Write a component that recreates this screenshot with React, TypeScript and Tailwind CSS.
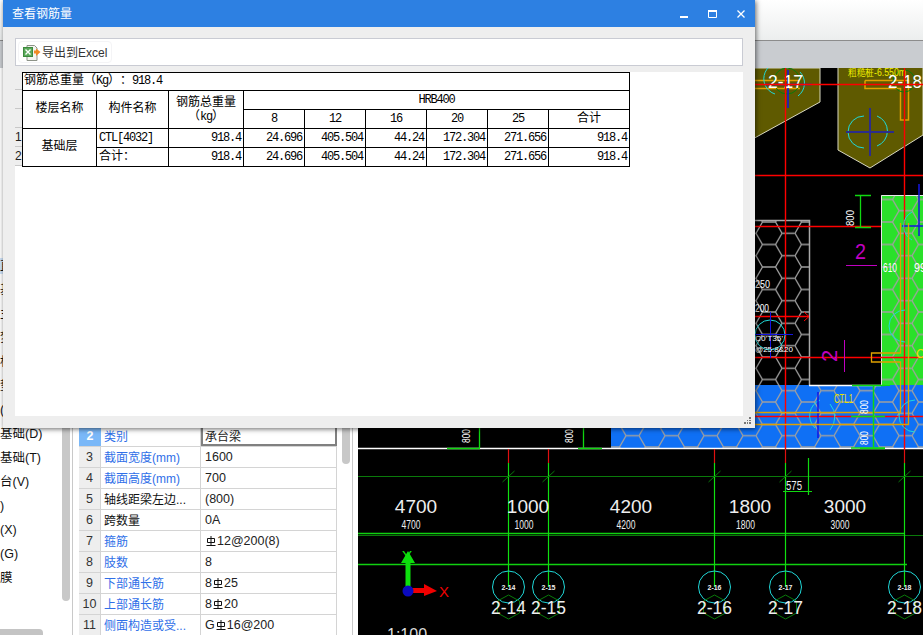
const cjk = { fontFamily: '"Liberation Sans", "Noto Sans CJK SC", sans-serif' };

const listRows = ['', '', '', '', '', '', '', '直', '基', '主', '梦', '根', '垫', '(', '基础(D)', '基础(T)', '台(V)', ')', '(X)', '(G)', '膜'];

type Prop = { no: number; name: string; value: React.ReactNode; blue: boolean };

function Steel() {
  return (
    <svg width="10" height="11" viewBox="0 0 10 11" className="inline-block align-[3px] mx-[1px]">
      <path d="M1.5 2.5H8.5V6.5H1.5ZM5 0V9.5M0.5 9.5H9.5" fill="none" stroke="#111" strokeWidth="1" />
    </svg>
  );
}

const props: Prop[] = [
  { no: 3, name: '截面宽度(mm)', value: '1600', blue: true },
  { no: 4, name: '截面高度(mm)', value: '700', blue: true },
  { no: 5, name: '轴线距梁左边...', value: '(800)', blue: false },
  { no: 6, name: '跨数量', value: '0A', blue: false },
  { no: 7, name: '箍筋', value: <><Steel />12@200(8)</>, blue: true },
  { no: 8, name: '肢数', value: '8', blue: true },
  { no: 9, name: '下部通长筋', value: <>8<Steel />25</>, blue: true },
  { no: 10, name: '上部通长筋', value: <>8<Steel />20</>, blue: true },
  { no: 11, name: '侧面构造或受...', value: <>G<Steel />16@200</>, blue: true },
];

const bars = ['8', '12', '16', '20', '25'];
const nums = ['24.696', '405.504', '44.24', '172.304', '271.656'];
const axes = [
  { x: 508.5, label: '2-14' },
  { x: 548.5, label: '2-15' },
  { x: 714.5, label: '2-16' },
  { x: 785.5, label: '2-17' },
  { x: 904.5, label: '2-18' },
];
const dims = [
  { big: 416, small: 411, t: '4700' },
  { big: 528, small: 524, t: '1000' },
  { big: 631, small: 626, t: '4200' },
  { big: 750, small: 745.5, t: '1800' },
  { big: 845, small: 840, t: '3000' },
];

function ExcelIcon() {
  return (
    <svg width="18" height="18" viewBox="0 0 18 18">
      <path d="M4 1.5H11.5L14 4V16.5H4Z" fill="#f4f4f0" stroke="#8d9388" />
      <rect x="0.5" y="3.5" width="9" height="9" fill="#5aa85a" stroke="#3d8a3d" />
      <path d="M2.5 5.5L7.5 10.5M7.5 5.5L2.5 10.5" stroke="#fff" strokeWidth="1.4" />
      <path d="M11 6.5V9.5H13V12L17.5 8L13 4.5V6.5Z" fill="#f08a24" />
    </svg>
  );
}

function Cad() {
  const hex = 'M0 11.25L6.5 0H19.5L26 11.25L19.5 22.5H6.5ZM26 11.25H39';
  return (
    <svg width="565" height="567" viewBox="358 68 565 567" className="block" style={{ fontFamily: '"Liberation Sans", sans-serif' }}>
      <defs>
        <pattern id="hexes" patternUnits="userSpaceOnUse" x="756" y="222" width="39" height="22.5">
          <path d={hex} fill="none" stroke="#a0a0a0" strokeWidth="1.3" />
        </pattern>
      </defs>
      <rect x="358" y="68" width="565" height="567" fill="#000" />

      {/* olive caps */}
      <path d="M700 68H820V102L700 168Z" fill="#5f5a00" stroke="#d8d8c0" />
      <path d="M838 68V150L870 168L923 135V68" fill="#5f5a00" stroke="#d8d8c0" />
      <path d="M755 80.5H800M755 88.5H800M865 80.5H908.5V120H900.5V88.5H865V80.5" fill="none" stroke="#e0a000" strokeWidth="1.5" />
      <g fill="none">
        <path d="M788 65A16 16 0 1 0 775 94" stroke="#20d8d8" />
        <path d="M800 72A16 16 0 0 1 798 96" stroke="#20d8d8" />
        <circle cx="787" cy="81" r="13" stroke="#0b7a0b" />
        <circle cx="904" cy="81" r="11" stroke="#0b7a0b" />
        <path d="M864 116A16 16 0 0 0 864 148M877 116A16 16 0 0 1 877 146" stroke="#20d8d8" />
        <path d="M846 132H894M870 108V156" stroke="#2c2c8c" strokeWidth="2" />
        <path d="M765 84.5H812M788 70V108" stroke="#1414e0" strokeWidth="1.5" />
      </g>
      <text x="848" y="76" fontSize="11" fill="#f0f000" textLength="58" lengthAdjust="spacingAndGlyphs">粗糙桩-6.550m</text>
      <text x="768" y="88" fontSize="19" fill="#fff" textLength="35" lengthAdjust="spacingAndGlyphs">2-17</text>
      <text x="888" y="88" fontSize="19" fill="#fff" textLength="34" lengthAdjust="spacingAndGlyphs">2-18</text>

      {/* hatched slab */}
      <rect x="700" y="220" width="109" height="165" fill="url(#hexes)" stroke="none" />
      <path d="M755 220.5H809.5V385" fill="none" stroke="#a8a8a8" strokeWidth="1.5" />
      <rect x="881" y="195" width="42" height="190" fill="#2ae02a" />
      <rect x="881" y="195" width="42" height="190" fill="url(#hexes)" />
      <path d="M881.5 385V195.5H923" fill="none" stroke="#e8e8e8" />
      <rect x="611" y="385" width="312" height="63" fill="#0f70f5" />
      <rect x="611" y="385" width="312" height="63" fill="url(#hexes)" />
      <path d="M358 448.5H923M809 385.5H881" stroke="#fff" strokeWidth="1.5" />

      {/* red grid */}
      <g stroke="#f00" strokeWidth="1.4">
        <path d="M700 84.5H923M700 175.5H923M700 226.5H881M700 316.5H809M700 357.5H923M700 416.5H923" />
        <path d="M785.5 68V449M904.5 68V449" />
      </g>
      <path d="M804 312L809 316.5L804 321" fill="none" stroke="#f00" />

      {/* cyan + blue marks */}
      <g fill="none">
        <circle cx="770" cy="335" r="15" stroke="#20d8d8" />
        <path d="M770.5 312V358M755 334.5H793" stroke="#1414e0" />
        <path d="M820 400A17 17 0 0 0 815 428M830 404A20 20 0 0 1 830 430" stroke="#20d8d8" />
        <path d="M818 392V438" stroke="#1414e0" strokeWidth="1.5" />
        <path d="M919 184V236M902 226H923" stroke="#1414e0" strokeWidth="1.5" />
        <path d="M912 212A16 16 0 0 0 912 240" stroke="#20d8d8" />
        <path d="M905 310A16 16 0 0 0 905 342" stroke="#20d8d8" />
        <path d="M915 400A16 16 0 0 0 915 432" stroke="#20d8d8" />
        <path d="M900.5 223V353H871.5V362H900.5V412.5H755M908.5 223V424.5H755" stroke="#e0a000" strokeWidth="1.3" />
      </g>

      {/* magenta section marks */}
      <path d="M846 265.5H877" stroke="#c000c0" />
      <text x="855" y="259" fontSize="22" fill="#c000c0" textLength="11" lengthAdjust="spacingAndGlyphs">2</text>
      <path d="M844.5 340V372" stroke="#c000c0" />
      <text transform="translate(837 362) rotate(-90)" fontSize="22" fill="#c000c0">2</text>

      {/* green dimension marks */}
      <g stroke="#10d810" fill="none">
        <path d="M860.5 195V228M855 195.5H871M855 227.5H871" strokeWidth="1.3" />
        <path d="M873 385.5H890" />
        <path d="M873.5 385V448M852 385.5H885M851 416.5H885M851 448H885" strokeWidth="1.5" />
        <path d="M479.5 428V448M447 448.5H480M583.5 428V448M578 448.5H602M860 448.5H885" strokeWidth="1.3" />
      </g>
      <g fill="#fff" fontSize="11">
        <text transform="translate(854 226) rotate(-90)" textLength="16" lengthAdjust="spacingAndGlyphs">800</text>
        <text transform="translate(868 414) rotate(-90)" textLength="14" lengthAdjust="spacingAndGlyphs">800</text>
        <text transform="translate(868 445) rotate(-90)" textLength="14" lengthAdjust="spacingAndGlyphs">800</text>
        <text transform="translate(470 443) rotate(-90)" textLength="14" lengthAdjust="spacingAndGlyphs">800</text>
        <text transform="translate(573 443) rotate(-90)" textLength="14" lengthAdjust="spacingAndGlyphs">800</text>
        <text x="883" y="272" fontSize="13" textLength="14" lengthAdjust="spacingAndGlyphs">610</text>
        <text x="914" y="272" fontSize="13" textLength="12" lengthAdjust="spacingAndGlyphs">99</text>
        <text x="755" y="288" textLength="15" lengthAdjust="spacingAndGlyphs">250</text>
        <text x="755" y="312" textLength="14" lengthAdjust="spacingAndGlyphs">200</text>
        <text x="755" y="341" fontSize="8" textLength="28" lengthAdjust="spacingAndGlyphs">C0'T35'</text>
        <text x="755" y="352" fontSize="8" textLength="38" lengthAdjust="spacingAndGlyphs">@25:8&amp;20</text>
      </g>
      <text x="834" y="403" fontSize="12" fill="#e8e000" textLength="19" lengthAdjust="spacingAndGlyphs">CTL1</text>
      <text x="916" y="358" fontSize="12" fill="#e8e000">C</text>

      {/* lower axis lines */}
      <path d="M358 476.5H923M358 535.5H923" stroke="#0a7a0a" strokeWidth="1.2" />
      <path d="M358 533.5H905M358 564.5H907" stroke="#10d010" strokeWidth="1.3" />
      {axes.map((a) => (
        <g key={a.label}>
          <path d={`M${a.x} 449V463`} stroke="#e01010" strokeWidth="1.2" />
          <path d={`M${a.x} 463V587`} stroke="#10e010" strokeWidth="1.2" />
          <path d={`M${a.x - 6} 482L${a.x + 6} 471`} stroke="#0a7a0a" />
          <circle cx={a.x} cy="587" r="16" fill="none" stroke="#20d8d8" />
          <path d={`M${a.x} 595L${a.x + 11} 601V613L${a.x} 619L${a.x - 11} 613V601Z`} fill="none" stroke="#0a7a0a" />
          <text x={a.x} y="590" fontSize="7" fontWeight="700" fill="#eee" textAnchor="middle">{a.label}</text>
          <text x={a.x} y="614" fontSize="19" fill="#eee" textAnchor="middle" textLength="35" lengthAdjust="spacingAndGlyphs">{a.label}</text>
        </g>
      ))}
      <path d="M808.5 458V495M783 491.5H812" stroke="#10d810" fill="none" strokeWidth="1.2" />
      <text x="786" y="490" fontSize="13" fill="#eee" textLength="16" lengthAdjust="spacingAndGlyphs">575</text>
      {dims.map((d) => (
        <g key={d.t} fill="#eee" textAnchor="middle">
          <text x={d.big} y="513" fontSize="19">{d.t}</text>
          <text x={d.small} y="529" fontSize="13" textLength="19" lengthAdjust="spacingAndGlyphs">{d.t}</text>
        </g>
      ))}

      {/* ucs */}
      <path d="M405.5 589V563H401L408 551L415 563H410.5V589Z" fill="#0de00d" />
      <path d="M408 588H424V584L437 591L424 596V593H408Z" fill="#f00000" />
      <circle cx="408" cy="591" r="5.5" fill="#0a0ac0" />
      <text x="402" y="561" fontSize="15" fill="#0de00d">Y</text>
      <text x="439" y="597" fontSize="15" fill="#f00000">X</text>
      <text x="387" y="640" fontSize="16" fill="#ddd">1:100</text>
    </svg>
  );
}

function Dialog() {
  return (
    <div className="absolute left-[3px] top-0 w-[752px] h-[428px] bg-[#eeeeee] shadow-[1px_1px_5px_rgba(0,0,0,0.6)] flex flex-col">
      <div className="h-[27px] bg-[#2d80e2] flex items-center justify-between pl-[9px] pr-[10px] text-white text-[12px]">
        <span>查看钢筋量</span>
        <div className="flex items-center gap-[20px]">
          <svg width="8" height="8" viewBox="0 0 8 8"><path d="M0 7H8" stroke="#fff" strokeWidth="2" /></svg>
          <svg width="9" height="8" viewBox="0 0 9 8"><path d="M0.5 1.5H8.5V7.5H0.5Z" fill="none" stroke="#fff" /><path d="M0 1H9" stroke="#fff" strokeWidth="2" /></svg>
          <svg width="8" height="8" viewBox="0 0 8 8"><path d="M0.5 0.5L7.5 7.5M7.5 0.5L0.5 7.5" stroke="#fff" strokeWidth="1.3" /></svg>
        </div>
      </div>
      <div className="flex-1 flex flex-col px-[12px] pt-[11px]">
        <div className="h-[28px] bg-white border border-[#c9cbd3] flex items-center px-[2px]">
          <div className="h-[22px] flex items-center gap-[1px] px-[4px] pt-[1px] rounded border border-[#f4f4f6] text-[12px] text-[#333]">
            <ExcelIcon />
            <span>导出到Excel</span>
          </div>
        </div>
        <div className="mt-[6px] h-[344px] bg-white flex items-start">
          <div className="w-[7px] shrink-0 text-[12px] leading-[18px] text-[#222]">
            {[18, 19, 19, 19, 19].map((h, i) => (
              <div key={i} className="bg-[#eeeeee] border-b border-[#c8c8c8] overflow-visible" style={{ height: h }}>
                {i > 2 ? i - 2 : ''}
              </div>
            ))}
          </div>
          <StatsTable />
        </div>
      </div>
      <div className="absolute right-[4px] bottom-[4px] w-[7px] h-[7px] grid grid-cols-3 gap-[1px]">
        <span /><span /><span className="bg-[#777]" />
        <span /><span className="bg-[#777]" /><span className="bg-[#777]" />
        <span className="bg-[#777]" /><span className="bg-[#777]" /><span className="bg-[#777]" />
      </div>
    </div>
  );
}

function StatsTable() {
  const cell = 'border border-black p-0 overflow-hidden whitespace-nowrap';
  const num = `${cell} text-right pr-[2px] h-[19px]`;
  const mono = { fontFamily: '"Liberation Mono", "Noto Sans CJK SC", monospace' };
  return (
    <table className="table-fixed border-collapse w-[607px] text-[12px] leading-[17px] tracking-[-1.2px] text-black [font-kerning:none] [text-spacing-trim:space-all]" style={mono}>
      <colgroup>
        <col className="w-[74px]" />
        <col className="w-[72px]" />
        <col className="w-[75px]" />
        <col className="w-[61px]" />
        <col className="w-[61px]" />
        <col className="w-[61px]" />
        <col className="w-[61px]" />
        <col className="w-[61px]" />
        <col className="w-[81px]" />
      </colgroup>
      <tbody>
        <tr>
          <td colSpan={9} className={`${cell} h-[18px] pl-[1px]`}>
            <span className="tracking-normal">钢筋总重量（</span>Kg<span className="tracking-normal">）：</span>918.4
          </td>
        </tr>
        <tr>
          <td rowSpan={2} className={`${cell} text-center tracking-normal`}>楼层名称</td>
          <td rowSpan={2} className={`${cell} text-center tracking-normal`}>构件名称</td>
          <td rowSpan={2} className={`${cell} text-center leading-[14px]`}>
            <div className="tracking-normal">钢筋总重量</div>
            <div><span className="tracking-normal">（</span>kg<span className="tracking-normal">）</span></div>
          </td>
          <td colSpan={6} className={`${cell} text-center h-[19px]`}>HRB400</td>
        </tr>
        <tr>
          {bars.map((b) => (
            <td key={b} className={`${cell} text-center h-[19px]`}>{b}</td>
          ))}
          <td className={`${cell} text-center tracking-normal`}>合计</td>
        </tr>
        <tr>
          <td rowSpan={2} className={`${cell} text-center tracking-normal`}>基础层</td>
          <td className={`${cell} pl-[2px]`}>CTL[4032]</td>
          <td className={num}>918.4</td>
          {nums.map((n) => (
            <td key={n} className={num}>{n}</td>
          ))}
          <td className={num}>918.4</td>
        </tr>
        <tr>
          <td className={`${cell} pl-[2px]`}><span className="tracking-normal">合计：</span></td>
          <td className={num}>918.4</td>
          {nums.map((n) => (
            <td key={n} className={num}>{n}</td>
          ))}
          <td className={num}>918.4</td>
        </tr>
      </tbody>
    </table>
  );
}

export default function App() {
  return (
    <div className="relative w-[923px] h-[635px] overflow-hidden bg-white flex flex-col" style={cjk}>
      <div className="h-[41px] shrink-0 bg-gradient-to-b from-white to-[#eceeee] border-b border-[#8c8c8c]" />
      <div className="h-[27px] shrink-0 bg-[#c9ccd0]" />
      <div className="flex-1 flex min-h-0">
        <div className="w-[73px] shrink-0 flex flex-col border-r border-[#c9c9c9] overflow-hidden">
          <div className="h-[561px] shrink-0 flex">
            <div className="w-[62px] pt-[18px] text-[12.5px] text-[#111]">
              {listRows.map((r, i) => (
                <div key={i} className="h-[24px] flex items-center whitespace-nowrap">
                  <span className={i === 7 ? 'bg-[#cfe2f8] leading-[16px] w-full' : ''}>{r}</span>
                </div>
              ))}
            </div>
            <div className="w-[8px] h-[533px] rounded-b bg-[#c8c8c8]" />
          </div>
          <div className="mt-auto h-[6px] w-[43px] rounded-tr bg-[#c4c4c4]" />
        </div>
        <div className="w-[280px] shrink-0 pl-[6px] pt-[358px] flex border-r border-[#c9c9c9] text-[12.5px] text-[#222]">
          <div className="w-[258px] shrink-0">
            <div className="flex h-[21px] border-b border-[#d4d4d4]">
              <div className="w-[22px] shrink-0 bg-[#7ab8f8] text-white font-bold flex items-center justify-center pt-[1px]">2</div>
              <div className="w-[100px] shrink-0 border-r border-[#d4d4d4] pl-[3px] pt-[1px] flex items-center text-[12px] text-[#2f6fe8]">类别</div>
              <div className="flex-1 border-2 border-[#808080] flex items-center pl-[2px] pt-[1px] text-[12px]">承台梁</div>
            </div>
            {props.map((p) => (
              <div key={p.no} className="flex h-[21px] border-b border-[#d4d4d4]">
                <div className="w-[22px] shrink-0 bg-[#eeeeee] border-r border-[#d4d4d4] flex items-center justify-center pt-[1px] text-[#333]">{p.no}</div>
                <div className={`w-[100px] shrink-0 border-r border-[#d4d4d4] pl-[3px] pt-[1px] flex items-center text-[12px] whitespace-nowrap ${p.blue ? 'text-[#2f6fe8]' : 'text-[#111]'}`}>{p.name}</div>
                <div className="flex-1 border-r border-[#d4d4d4] flex items-center pl-[4px] pt-[1px] whitespace-nowrap">{p.value}</div>
              </div>
            ))}
          </div>
          <div className="ml-[5px] w-[8px] h-[40px] -mt-[2px] rounded-b bg-[#c8c8c8]" />
        </div>
        <div className="w-[5px] shrink-0 bg-white" />
        <Cad />
      </div>
      <Dialog />
    </div>
  );
}
